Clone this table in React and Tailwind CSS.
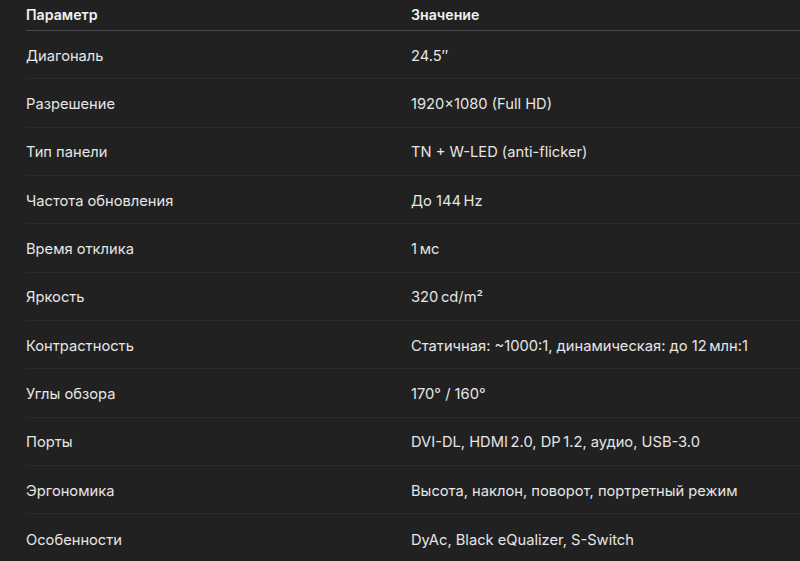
const rows = [
  ['Диагональ', '24.5″'],
  ['Разрешение', '1920×1080 (Full HD)'],
  ['Тип панели', 'TN + W-LED (anti-flicker)'],
  ['Частота обновления', 'До 144\u202FHz'],
  ['Время отклика', '1\u202Fмс'],
  ['Яркость', '320\u202Fcd/m²'],
  ['Контрастность', 'Статичная: ~1000:1, динамическая: до 12\u202Fмлн:1'],
  ['Углы обзора', '170° / 160°'],
  ['Порты', 'DVI-DL, HDMI\u202F2.0, DP\u202F1.2, аудио, USB-3.0'],
  ['Эргономика', 'Высота, наклон, поворот, портретный режим'],
  ['Особенности', 'DyAc, Black eQualizer, S-Switch'],
];

export default function App() {
  return (
    <div className="w-[800px] h-[561px] overflow-hidden bg-[#212121] pl-[26px] font-['Inter',sans-serif] text-[14.7px] text-[#e6e6e6]">
      <div className="flex h-[31px] items-end pb-[5px] font-semibold text-[14.2px] text-[#f2f2f2] border-b border-[#4a4a4a]">
        <div className="w-[385px]">Параметр</div>
        <div>Значение</div>
      </div>
      {rows.map(([k, v], i) => (
        <div
          key={k}
          className={`flex h-[48.35px] items-center pt-[2px] ${i < rows.length - 1 ? 'border-b border-[#2b2b2b]' : ''}`}
        >
          <div className="w-[385px]">{k}</div>
          <div>{v}</div>
        </div>
      ))}
    </div>
  );
}
